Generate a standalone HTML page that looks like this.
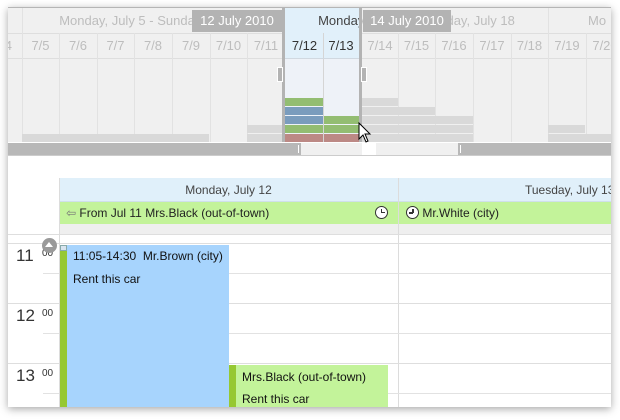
<!DOCTYPE html>
<html><head><meta charset="utf-8"><style>
*{margin:0;padding:0;box-sizing:border-box}
body{width:620px;height:420px;background:#fff;position:relative;overflow:hidden;font-family:"Segoe UI","Liberation Sans","DejaVu Sans",sans-serif}
.a{position:absolute}
#win{left:8px;top:7px;width:603px;height:400px;background:#fff;border-top:1px solid #b5b5b5;box-shadow:0 2px 8px rgba(0,0,0,.35);overflow:hidden}
.g{color:#bdbdbd}
.t{font-size:13px;text-align:center;line-height:25px;white-space:nowrap}
.bar{position:absolute;height:8px}
.gr{background:#d9d9d9}
.gn{background:#93bd72}
.bl{background:#7a9cbd}
.rd{background:#bc8985}
.hl{position:absolute;height:1px;background:#dedede}
</style></head><body>
<div id="win" class="a">
<!-- navigator -->
<div class="a" style="left:0;top:0;width:603px;height:134px;background:#f0f0f0"></div>
<div class="a g t" style="left:14px;top:0;width:263px;height:25px">Monday, July 5 - Sunday, July 11</div>
<div class="a g t" style="left:277px;top:0;width:263px;height:25px">Monday, July 12 - Sunday, July 18</div>
<div class="a g t" style="left:580px;top:0;width:60px;height:25px;text-align:left">Mo</div>
<div class="a" style="left:14px;top:0;width:1px;height:134px;background:#e2e2e2"></div>
<div class="a" style="left:540px;top:0;width:1px;height:25px;background:#e2e2e2"></div>
<div class="hl" style="left:0;top:25px;width:603px"></div>
<div class="hl" style="left:0;top:50px;width:603px"></div>
<div id="cols"></div>
<!-- selection -->
<div class="a" style="left:277px;top:0;width:74px;height:134px;background:#eef2f8"></div>
<div class="a" style="left:277px;top:0;width:74px;height:50px;background:#e1f0fa;overflow:hidden">
<div class="a t" style="left:0;top:0;width:263px;color:#444">Monday, July 12 - Sunday, July 18</div>
</div>
<div class="a t" style="left:278px;top:25px;width:37px;color:#333">7/12</div>
<div class="a t" style="left:315px;top:25px;width:36px;color:#333">7/13</div>
<div class="a" style="left:315px;top:25px;width:1px;height:109px;background:#d5d5d5"></div>
<div class="hl" style="left:277px;top:50px;width:74px;background:#d0d8e0"></div>
<div class="a" style="left:274px;top:0;width:3px;height:134px;background:#b3b3b3"></div>
<div class="a" style="left:351px;top:0;width:3px;height:134px;background:#b3b3b3"></div>
<div class="a" style="left:269px;top:59px;width:6px;height:15px;background:#b3b3b3;border:1px solid #fff"></div>
<div class="a" style="left:353px;top:59px;width:6px;height:15px;background:#b3b3b3;border:1px solid #fff"></div>
<div class="bar gn" style="left:277px;top:90px;width:38px"></div>
<div class="bar bl" style="left:277px;top:99px;width:38px"></div>
<div class="bar bl" style="left:277px;top:108px;width:38px"></div>
<div class="bar gn" style="left:277px;top:117px;width:38px"></div>
<div class="bar rd" style="left:277px;top:126px;width:38px"></div>
<div class="bar gn" style="left:316px;top:108px;width:35px"></div>
<div class="bar gn" style="left:316px;top:117px;width:35px"></div>
<div class="bar rd" style="left:316px;top:126px;width:35px"></div>
<!-- gray bars -->
<div class="bar gr" style="left:14px;top:126px;width:187px"></div>
<div class="bar gr" style="left:239px;top:117px;width:35px"></div>
<div class="bar gr" style="left:239px;top:126px;width:35px"></div>
<div class="bar gr" style="left:354px;top:90px;width:36px"></div>
<div class="bar gr" style="left:354px;top:99px;width:73px"></div>
<div class="bar gr" style="left:354px;top:108px;width:111px"></div>
<div class="bar gr" style="left:354px;top:117px;width:111px"></div>
<div class="bar gr" style="left:354px;top:126px;width:111px"></div>
<div class="bar gr" style="left:540px;top:117px;width:37px"></div>
<div class="bar gr" style="left:540px;top:126px;width:63px"></div>
<!-- labels -->
<div class="a" style="left:184px;top:2px;width:90px;height:22px;background:#b3b3b3;color:#fff;font-size:13px;text-align:center;line-height:22px">12 July 2010</div>
<div class="a" style="left:355px;top:2px;width:88px;height:22px;background:#b3b3b3;color:#fff;font-size:13px;text-align:center;line-height:22px">14 July 2010</div>
<!-- scrollbar -->
<div class="a" style="left:0;top:134px;width:603px;height:14px;background:#f0f0f0;border-top:1px solid #fff;border-bottom:1px solid #ccc"></div>
<div class="a" style="left:0;top:135px;width:293px;height:12px;background:#b8b8b8"></div>
<div class="a" style="left:354px;top:135px;width:14px;height:12px;background:#fff"></div>
<div class="a" style="left:450px;top:135px;width:153px;height:12px;background:#b8b8b8"></div>
<div class="a" style="left:290px;top:137px;width:1px;height:8px;background:#fff"></div>
<div class="a" style="left:452px;top:137px;width:1px;height:8px;background:#fff"></div>
<!-- cursor -->
<svg class="a" style="left:350px;top:114px" width="14" height="22" viewBox="0 0 14 22"><path d="M1 1 L1 17 L5 13 L8 20 L10 19 L7 12 L12 12 Z" fill="#fff" stroke="#000" stroke-width="1"/></svg>

<!-- scheduler -->
<div class="a" style="left:51px;top:170px;width:552px;height:24px;background:#e0f0fa;border-bottom:1px solid #cfe0ea"></div>
<div class="a" style="left:51px;top:170px;width:339px;font-size:12px;line-height:24px;text-align:center;color:#444">Monday, July 12</div>
<div class="a" style="left:517px;top:170px;width:120px;font-size:12px;line-height:24px;color:#444;white-space:nowrap">Tuesday, July 13</div>
<div class="a" style="left:51px;top:194px;width:552px;height:22px;background:#c3f39a"></div>
<div class="a" style="left:51px;top:216px;width:552px;height:10px;background:#efefef"></div>
<div class="a" style="left:390px;top:170px;width:1px;height:230px;background:#dcdcdc"></div>
<div class="a" style="left:58px;top:194px;font-size:12px;line-height:22px;color:#222;white-space:nowrap"><span style="color:#777">&#8678;</span> From Jul 11 Mrs.Black (out-of-town)</div>
<div class="a" style="left:398px;top:194px;font-size:12px;line-height:22px;color:#222;white-space:nowrap"><span style="display:inline-block;width:13px;height:13px;border:1.5px solid #333;border-radius:50%;vertical-align:-2px;background:#fff;position:relative"><span style="position:absolute;left:5px;top:2px;width:1.5px;height:4px;background:#333"></span><span style="position:absolute;left:2px;top:5px;width:4px;height:1.5px;background:#333"></span></span> Mr.White (city)</div>
<div class="a" style="left:367px;top:198px;width:13px;height:13px;border:1.5px solid #333;border-radius:50%;background:#fff"><span style="position:absolute;left:4.5px;top:1.5px;width:1.5px;height:4px;background:#333"></span><span style="position:absolute;left:4.5px;top:4.5px;width:4px;height:1.5px;background:#333"></span></div>
<div class="hl" style="left:0;top:226px;width:603px"></div>
<div class="hl" style="left:0;top:235px;width:603px"></div>
<div class="hl" style="left:35px;top:265px;width:568px;background:#e2e2e2"></div>
<div class="hl" style="left:0;top:295px;width:603px"></div>
<div class="hl" style="left:35px;top:325px;width:568px;background:#e2e2e2"></div>
<div class="hl" style="left:0;top:355px;width:603px"></div>
<div class="hl" style="left:35px;top:385px;width:568px;background:#e2e2e2"></div>
<div class="a" style="left:51px;top:170px;width:1px;height:230px;background:#dcdcdc"></div>
<div class="a" style="left:8px;top:238px;font-size:17px;color:#333">11</div>
<div class="a" style="left:34px;top:240px;font-size:10px;color:#333">00</div>
<div class="a" style="left:8px;top:298px;font-size:17px;color:#333">12</div>
<div class="a" style="left:34px;top:300px;font-size:10px;color:#333">00</div>
<div class="a" style="left:8px;top:358px;font-size:17px;color:#333">13</div>
<div class="a" style="left:34px;top:360px;font-size:10px;color:#333">00</div>
<div class="a" style="left:34px;top:230px;width:15px;height:15px;border-radius:50%;background:#9a9a9a"></div>
<div class="a" style="left:37px;top:234px;width:0;height:0;border-left:4.5px solid transparent;border-right:4.5px solid transparent;border-bottom:5px solid #fff"></div>
<!-- events -->
<div class="a" style="left:52px;top:237px;width:169px;height:170px;background:#a7d4fd"></div>
<div class="a" style="left:52px;top:237px;width:7px;height:170px;background:#96c832"></div>
<div class="a" style="left:52px;top:237px;width:7px;height:6px;background:#d8e4ee;border:1px solid #8aa"></div>
<div class="a" style="left:65px;top:241px;font-size:12px;color:#111;white-space:nowrap">11:05-14:30 &nbsp;Mr.Brown (city)</div>
<div class="a" style="left:65px;top:264px;font-size:12px;color:#111">Rent this car</div>
<div class="a" style="left:221px;top:357px;width:159px;height:50px;background:#c3f39a"></div>
<div class="a" style="left:221px;top:357px;width:7px;height:50px;background:#96c832"></div>
<div class="a" style="left:234px;top:362px;font-size:12px;color:#111;white-space:nowrap">Mrs.Black (out-of-town)</div>
<div class="a" style="left:234px;top:384px;font-size:12px;color:#111">Rent this car</div>
</div>
<script>
var c=document.getElementById('cols'),h='';
var xs=[[-24,14,'7/4'],[14,51,'7/5'],[51,89,'7/6'],[89,126,'7/7'],[126,164,'7/8'],[164,202,'7/9'],[202,239,'7/10'],[239,277,'7/11'],[354,390,'7/14'],[390,427,'7/15'],[427,465,'7/16'],[465,503,'7/17'],[503,540,'7/18'],[540,578,'7/19'],[578,616,'7/20']];
xs.forEach(function(a){h+='<div class="a g t" style="left:'+a[0]+'px;top:25px;width:'+(a[1]-a[0])+'px">'+a[2]+'</div><div class="a" style="left:'+a[1]+'px;top:25px;width:1px;height:109px;background:#e2e2e2"></div>';});
c.innerHTML=h;
</script>
</body></html>
